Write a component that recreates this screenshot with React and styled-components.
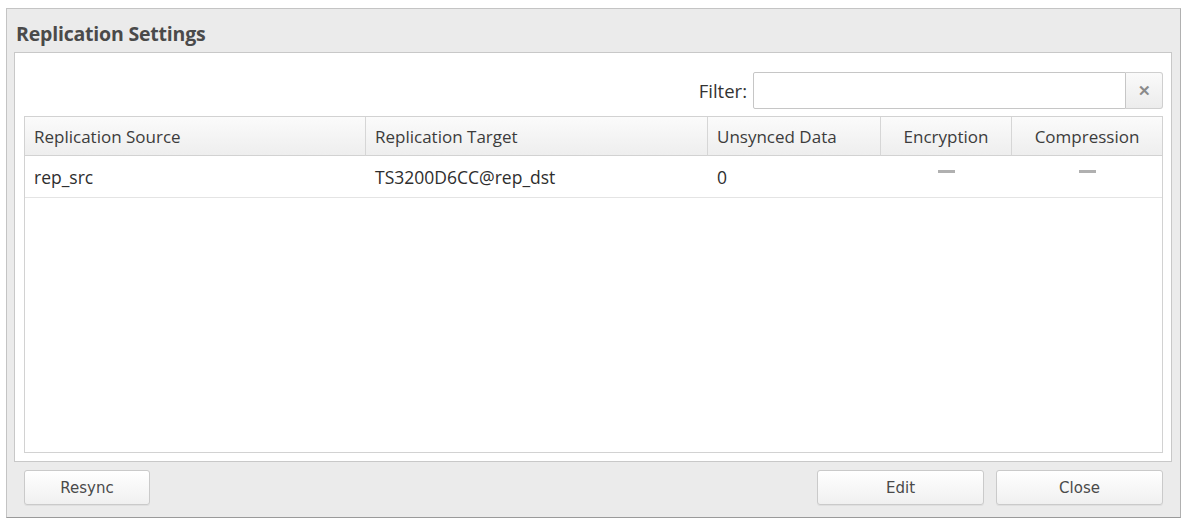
import styled, { createGlobalStyle } from "styled-components";

const GlobalStyle = createGlobalStyle`
  html, body {
    margin: 0;
    padding: 0;
    background: #ffffff;
    font-family: "Open Sans", "Liberation Sans", Arial, sans-serif;
    color: #333;
  }
`;

const Page = styled.div`
  padding: 8px 6px 6px 6px;
  width: 1187px;
  height: 524px;
  box-sizing: border-box;
`;

const Window = styled.div`
  height: 510px;
  box-sizing: border-box;
  background: #ebebeb;
  border: 1px solid #c4c4c4;
  border-bottom-color: #9a9a9a;
  border-right-color: #b0b0b0;
  display: flex;
  flex-direction: column;
  padding: 0 8px 0 7px;
`;

const Title = styled.div`
  height: 43px;
  box-sizing: border-box;
  display: flex;
  align-items: center;
  padding: 6px 0 0 2px;
  font-size: 19.5px;
  font-weight: bold;
  letter-spacing: -0.2px;
  color: #4a4a4a;
`;

const Body = styled.div`
  height: 410px;
  box-sizing: border-box;
  background: #fff;
  border: 1px solid #c8c8c8;
  padding: 19px 8px 8px 9px;
  display: flex;
  flex-direction: column;
`;

const FilterRow = styled.div`
  display: flex;
  align-items: center;
  justify-content: flex-end;
  gap: 6px;
  height: 37px;
  margin-bottom: 7px;
`;

const FilterLabel = styled.span`
  font-size: 18.5px;
  color: #333;
`;

const FilterBox = styled.div`
  display: flex;
`;

const FilterInput = styled.input`
  width: 373px;
  height: 37px;
  box-sizing: border-box;
  border: 1px solid #c6c6c6;
  border-radius: 2px 0 0 2px;
  outline: none;
  padding: 0 6px;
`;

const ClearButton = styled.button`
  width: 37px;
  height: 37px;
  box-sizing: border-box;
  border: 1px solid #cfcfcf;
  border-left: none;
  border-radius: 0 3px 3px 0;
  background: linear-gradient(#fafafa, #ececec);
  color: #8a8a8a;
  font-size: 15px;
  font-weight: bold;
  display: flex;
  align-items: center;
  justify-content: center;
  padding: 0;
`;

const Table = styled.div`
  flex: 1;
  border: 1px solid #d2d2d2;
  display: flex;
  flex-direction: column;
`;

const Grid = styled.div`
  display: grid;
  grid-template-columns: 341px 342px 173px 131px 1fr;
`;

const HeaderCell = styled.div`
  height: 39px;
  box-sizing: border-box;
  display: flex;
  align-items: center;
  justify-content: ${(p) => (p.$center ? "center" : "flex-start")};
  padding-left: ${(p) => (p.$center ? "0" : "9px")};
  font-size: 17px;
  color: #3c3c3c;
  background: linear-gradient(#fbfbfb, #eeeeee);
  border-right: ${(p) => (p.$last ? "none" : "1px solid #d6d6d6")};
  border-bottom: 1px solid #d2d2d2;
`;

const Cell = styled.div`
  height: 42px;
  box-sizing: border-box;
  display: flex;
  align-items: center;
  justify-content: ${(p) => (p.$center ? "center" : "flex-start")};
  padding-left: ${(p) => (p.$center ? "0" : "9px")};
  font-size: 17.5px;
  color: #2e2e2e;
  border-bottom: 1px solid #e4e4e4;
`;

const Dash = styled.span`
  display: inline-block;
  width: 17px;
  height: 3px;
  background: #b0b0b0;
  margin-top: -10px;
`;

const Footer = styled.div`
  flex: 1;
  display: flex;
  align-items: center;
  padding: 0 9px 4px 10px;
  gap: 12px;
`;

const Button = styled.button`
  width: ${(p) => p.$w}px;
  height: 35px;
  border: 1px solid #cacaca;
  border-radius: 3px;
  background: linear-gradient(#ffffff, #f0f0f0);
  font-family: "DejaVu Sans", sans-serif;
  font-size: 15px;
  font-weight: normal;
  color: #4a4a4a;
  box-shadow: 0 1px 0 rgba(0, 0, 0, 0.05);
  ${(p) => (p.$push ? "margin-left: auto;" : "")}
`;

const columns = [
  { label: "Replication Source" },
  { label: "Replication Target" },
  { label: "Unsynced Data" },
  { label: "Encryption", center: true },
  { label: "Compression", center: true },
];

const rows = [["rep_src", "TS3200D6CC@rep_dst", "0", null, null]];

export default function App() {
  return (
    <Page>
      <GlobalStyle />
      <Window>
        <Title>Replication Settings</Title>
        <Body>
          <FilterRow>
            <FilterLabel>Filter:</FilterLabel>
            <FilterBox>
              <FilterInput />
              <ClearButton>✕</ClearButton>
            </FilterBox>
          </FilterRow>
          <Table>
            <Grid>
              {columns.map((c, i) => (
                <HeaderCell
                  key={c.label}
                  $center={c.center}
                  $last={i === columns.length - 1}
                >
                  {c.label}
                </HeaderCell>
              ))}
              {rows.map((r) =>
                r.map((v, i) => (
                  <Cell key={i} $center={columns[i].center}>
                    {v === null ? <Dash /> : v}
                  </Cell>
                ))
              )}
            </Grid>
          </Table>
        </Body>
        <Footer>
          <Button $w={126}>Resync</Button>
          <Button $w={167} $push>
            Edit
          </Button>
          <Button $w={167}>Close</Button>
        </Footer>
      </Window>
    </Page>
  );
}
